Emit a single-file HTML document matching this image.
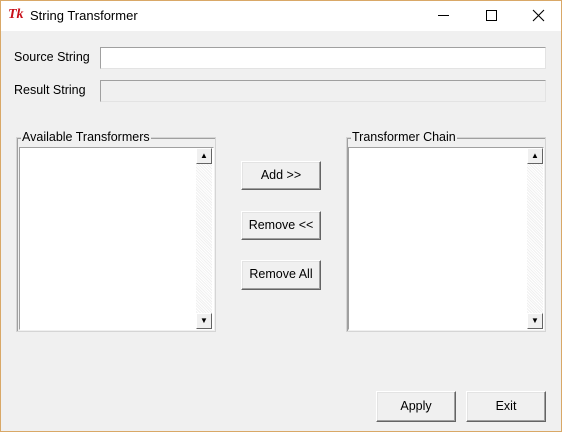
<!DOCTYPE html>
<html><head><style>
*{margin:0;padding:0;box-sizing:border-box}
body{width:562px;height:432px;background:#f0f0f0;font-family:"Liberation Sans","Noto Sans CJK SC",sans-serif;font-size:12.5px;color:#000;position:relative;overflow:hidden}
.a{position:absolute}
.win{left:0;top:0;width:562px;height:432px;border:1px solid #d9a867}
.title{left:1px;top:1px;width:560px;height:30px;background:#fff}
.entry{background:#fff;border:1px solid #a0a0a0;border-right-color:#e3e3e3;border-bottom-color:#e3e3e3}
.btn{background:#f0f0f0;border:1px solid;border-color:#fff #646464 #646464 #fff;box-shadow:inset -1px -1px 0 #a0a0a0,inset 1px 1px 0 #e3e3e3;text-align:center;line-height:26px}
.grp{border:1px solid #d5d5d5;box-shadow:inset 1px 1px 0 #a0a0a0}
.lbl{background:#f0f0f0;padding:0 1px;line-height:14px}
.lb{background:#fff;border:1px solid;border-color:#a0a0a0 #fff #fff #a0a0a0}
.sb{background:repeating-linear-gradient(45deg,#f0f0f0 0 1px,#fff 1px 2px)}
.arr{width:16px;height:16px;background:#f0f0f0;border:1px solid;border-color:#fff #646464 #646464 #fff;font-size:8px;line-height:14px;text-align:center}
</style></head><body>
<div class="a win"></div>
<div class="a title"></div>
<div class="a" style="left:8px;top:7px;color:#c8101a;font-style:italic;font-weight:bold;font-family:'Liberation Serif',serif;font-size:14px">Tk</div>
<div class="a" style="left:30px;top:8px;font-size:13px">String Transformer</div>
<div class="a" style="left:438px;top:15px;width:11px;height:1px;background:#000"></div>
<div class="a" style="left:486px;top:10px;width:11px;height:11px;border:1px solid #000"></div>
<svg class="a" style="left:532px;top:9px" width="13" height="13"><path d="M1 1L12 12M12 1L1 12" stroke="#000" stroke-width="1.1"/></svg>

<div class="a" style="left:14px;top:50px">Source String</div>
<div class="a entry" style="left:100px;top:47px;width:446px;height:22px"></div>
<div class="a" style="left:14px;top:83px">Result String</div>
<div class="a entry" style="left:100px;top:80px;width:446px;height:22px;background:#f0f0f0"></div>

<div class="a grp" style="left:16px;top:137px;width:200px;height:195px"></div>
<div class="a lbl" style="left:21px;top:130px">Available Transformers</div>
<div class="a lb" style="left:19px;top:147px;width:195px;height:183px"></div>
<div class="a sb" style="left:196px;top:148px;width:16px;height:181px"></div>
<div class="a arr" style="left:196px;top:148px">▲</div>
<div class="a arr" style="left:196px;top:313px">▼</div>

<div class="a grp" style="left:346px;top:137px;width:200px;height:195px"></div>
<div class="a lbl" style="left:351px;top:130px">Transformer Chain</div>
<div class="a lb" style="left:348px;top:147px;width:196px;height:183px"></div>
<div class="a sb" style="left:527px;top:148px;width:16px;height:181px"></div>
<div class="a arr" style="left:527px;top:148px">▲</div>
<div class="a arr" style="left:527px;top:313px">▼</div>

<div class="a btn" style="left:241px;top:161px;width:80px;height:29px">Add &gt;&gt;</div>
<div class="a btn" style="left:241px;top:211px;width:80px;height:29px">Remove &lt;&lt;</div>
<div class="a btn" style="left:241px;top:260px;width:80px;height:30px">Remove All</div>
<div class="a btn" style="left:376px;top:391px;width:80px;height:31px;line-height:28px">Apply</div>
<div class="a btn" style="left:466px;top:391px;width:80px;height:31px;line-height:28px">Exit</div>
</body></html>
